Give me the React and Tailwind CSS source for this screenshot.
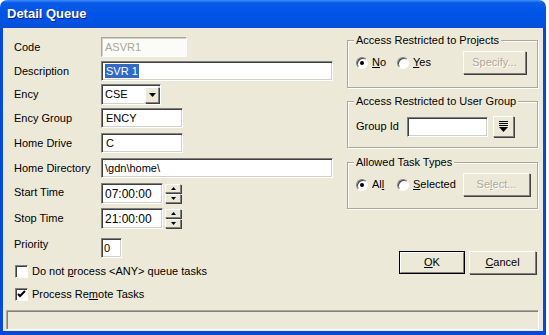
import React from "react";

const sunken =
  "border border-t-[#808080] border-l-[#808080] border-r-white border-b-white shadow-[inset_1px_1px_0_#404040,inset_-1px_-1px_0_#d4d0c8] bg-white";
const raised =
  "border border-t-white border-l-white border-r-[#808080] border-b-[#808080] shadow-[1px_1px_0_#404040] bg-[#ece9d8]";

function Radio({ checked }) {
  return (
    <div className="relative w-[12px] h-[12px] rounded-full bg-white border border-t-[#808080] border-l-[#808080] border-r-white border-b-white shadow-[inset_1px_1px_0_#404040]">
      {checked && (
        <div className="absolute left-[3px] top-[3px] w-[4px] h-[4px] rounded-full bg-black" />
      )}
    </div>
  );
}

function Check({ checked }) {
  return (
    <div className="w-[13px] h-[13px] bg-white border border-t-[#808080] border-l-[#808080] border-r-white border-b-white shadow-[inset_1px_1px_0_#404040] flex items-center justify-center">
      {checked && (
        <svg width="9" height="9" viewBox="0 0 9 9">
          <path d="M1 4 L3 6 L8 1" stroke="#000" strokeWidth="2" fill="none" />
        </svg>
      )}
    </div>
  );
}

function Spinner() {
  return (
    <div className="flex flex-col gap-[1px] ml-[2px] h-[21px] justify-center">
      <div className={raised + " w-[16px] h-[9px] flex items-center justify-center"}>
        <svg width="5" height="3" viewBox="0 0 5 3">
          <path d="M2.5 0 L5 3 L0 3 Z" fill="#000" />
        </svg>
      </div>
      <div className={raised + " w-[16px] h-[9px] flex items-center justify-center"}>
        <svg width="5" height="3" viewBox="0 0 5 3">
          <path d="M0 0 L5 0 L2.5 3 Z" fill="#000" />
        </svg>
      </div>
    </div>
  );
}

function Group({ title, children, className }) {
  return (
    <div
      className={
        "relative border border-[#aca899] shadow-[inset_1px_1px_0_white,1px_1px_0_white] " +
        className
      }
    >
      <span className="absolute left-[6px] top-[-8px] px-[2px] bg-[#ece9d8] leading-[14px]">
        {title}
      </span>
      {children}
    </div>
  );
}

export default function App() {
  return (
    <div className="w-[549px] h-[335px] bg-white font-['Liberation_Sans',Arial,sans-serif] text-[11px] text-black overflow-hidden">
      <div className="w-[546px] h-[335px] flex flex-col">
        {/* Title bar */}
        <div className="h-[28px] rounded-t-[7px] bg-[linear-gradient(to_bottom,#3d8ffc_0%,#0a5ae8_10%,#0055e6_45%,#0052e2_80%,#0a4ed2_100%)] flex items-center pl-[7px] shrink-0">
          <span className="text-white font-bold text-[13px] [text-shadow:1px_1px_#0a1e8a]">
            Detail Queue
          </span>
        </div>
        {/* Body */}
        <div className="flex-1 flex border-x-[3px] border-b-[4px] border-[#0449d8] bg-[#ece9d8]">
          <div className="flex-1 flex flex-col">
            <div className="flex">
              {/* Left column */}
              <div className="w-[344px] pl-[11px] flex flex-col">
                <div className="flex items-center mt-[9px] h-[20px]">
                  <div className="w-[87px]">Code</div>
                  <div className="w-[86px] h-[20px] border border-t-[#aca899] border-l-[#aca899] border-r-white border-b-white shadow-[inset_1px_1px_0_#d4d0c8] bg-[#fbfbf8] text-[#aca899] pl-[3px] flex items-center">
                    ASVR1
                  </div>
                </div>
                <div className="flex items-center mt-[4px] h-[20px]">
                  <div className="w-[87px]">Description</div>
                  <div className={sunken + " w-[232px] h-[20px] pl-[3px] flex items-center"}>
                    <span className="bg-[#316ac5] text-white leading-[14px] px-[1px]">
                      SVR 1
                    </span>
                  </div>
                </div>
                <div className="flex items-center mt-[3px] h-[21px]">
                  <div className="w-[87px]">Ency</div>
                  <div className={sunken + " w-[60px] h-[21px] pl-[3px] pr-[1px] flex items-center"}>
                    <span className="flex-1">CSE</span>
                    <div className={raised + " w-[14px] h-[16px] flex items-center justify-center"}>
                      <svg width="7" height="4" viewBox="0 0 7 4">
                        <path d="M0 0 L7 0 L3.5 4 Z" fill="#000" />
                      </svg>
                    </div>
                  </div>
                </div>
                <div className="flex items-center mt-[3px] h-[20px]">
                  <div className="w-[87px]">Ency Group</div>
                  <div className={sunken + " w-[82px] h-[20px] pl-[4px] flex items-center"}>
                    ENCY
                  </div>
                </div>
                <div className="flex items-center mt-[5px] h-[20px]">
                  <div className="w-[87px]">Home Drive</div>
                  <div className={sunken + " w-[82px] h-[20px] pl-[4px] flex items-center"}>
                    C
                  </div>
                </div>
                <div className="flex items-center mt-[5px] h-[20px]">
                  <div className="w-[87px]">Home Directory</div>
                  <div className={sunken + " w-[232px] h-[20px] pl-[3px] flex items-center"}>
                    \gdn\home\
                  </div>
                </div>
                <div className="flex items-center mt-[5px] h-[21px]">
                  <div className="w-[87px] pb-[2px]">Start Time</div>
                  <div className={sunken + " w-[62px] h-[21px] pl-[3px] flex items-center text-[12px]"}>
                    07:00:00
                  </div>
                  <Spinner />
                </div>
                <div className="flex items-center mt-[4px] h-[21px]">
                  <div className="w-[87px]">Stop Time</div>
                  <div className={sunken + " w-[62px] h-[21px] pl-[3px] flex items-center text-[12px]"}>
                    21:00:00
                  </div>
                  <Spinner />
                </div>
                <div className="flex items-center mt-[9px] h-[20px]">
                  <div className="w-[87px] pb-[8px]">Priority</div>
                  <div className={sunken + " w-[21px] h-[20px] pl-[2px] flex items-center"}>
                    0
                  </div>
                </div>
                <div className="flex items-center mt-[7px] h-[13px] ml-[1px] gap-[4px]">
                  <Check />
                  <span>
                    Do not <span className="underline">p</span>rocess &lt;ANY&gt; queue tasks
                  </span>
                </div>
                <div className="flex items-center mt-[10px] h-[13px] ml-[1px] gap-[4px]">
                  <Check checked />
                  <span>
                    Process Re<span className="underline">m</span>ote Tasks
                  </span>
                </div>
              </div>
              {/* Right column */}
              <div className="w-[191px] flex flex-col">
                <Group title="Access Restricted to Projects" className="mt-[12px] h-[48px] pt-[10px] pl-[8px]">
                  <div className="flex items-center h-[23px]">
                    <div className="w-[41px] flex items-center gap-[4px]">
                      <Radio checked />
                      <span>
                        <span className="underline">N</span>o
                      </span>
                    </div>
                    <div className="w-[66px] flex items-center gap-[4px]">
                      <Radio />
                      <span>
                        <span className="underline">Y</span>es
                      </span>
                    </div>
                    <div className={raised + " w-[63px] h-[23px] flex items-center justify-center text-[#aca899] [text-shadow:1px_1px_0_white]"}>
                      Specify...
                    </div>
                  </div>
                </Group>
                <Group title="Access Restricted to User Group" className="mt-[13px] h-[47px] pt-[14px] pl-[8px]">
                  <div className="flex items-center h-[21px]">
                    <div className="w-[51px]">Group Id</div>
                    <div className={sunken + " w-[81px] h-[20px]"} />
                    <div className={raised + " ml-[5px] w-[21px] h-[21px] flex items-center justify-center"}>
                      <svg width="9" height="12" viewBox="0 0 9 12">
                        <rect x="0" y="0" width="9" height="1" fill="#000" />
                        <rect x="0" y="2" width="9" height="1" fill="#000" />
                        <rect x="0" y="4" width="9" height="1" fill="#000" />
                        <path d="M0 6 L9 6 L4.5 11 Z" fill="#000" />
                      </svg>
                    </div>
                  </div>
                </Group>
                <Group title="Allowed Task Types" className="mt-[14px] h-[47px] pt-[10px] pl-[8px]">
                  <div className="flex items-center h-[23px]">
                    <div className="w-[41px] flex items-center gap-[4px]">
                      <Radio checked />
                      <span>
                        Al<span className="underline">l</span>
                      </span>
                    </div>
                    <div className="w-[66px] flex items-center gap-[4px]">
                      <Radio />
                      <span>
                        <span className="underline">S</span>elected
                      </span>
                    </div>
                    <div className={raised + " w-[67px] h-[23px] flex items-center justify-center text-[#aca899] [text-shadow:1px_1px_0_white]"}>
                      Se<span className="underline">l</span>ect...
                    </div>
                  </div>
                </Group>
                <div className="flex mt-[42px] ml-[52px] gap-[4px]">
                  <div className="w-[66px] h-[23px] border border-black">
                    <div className={raised + " w-full h-full flex items-center justify-center shadow-none border-r-[#404040] border-b-[#404040]"}>
                      <span>
                        <span className="underline">O</span>K
                      </span>
                    </div>
                  </div>
                  <div className={raised + " w-[67px] h-[23px] flex items-center justify-center"}>
                    <span>
                      <span className="underline">C</span>ancel
                    </span>
                  </div>
                </div>
              </div>
            </div>
            {/* Status bar */}
            <div className="mt-auto mb-[1px] ml-[3px] w-[533px] h-[20px] border border-t-[#aca899] border-l-[#aca899] border-r-white border-b-white shadow-[inset_1px_1px_0_#808080]" />
          </div>
        </div>
      </div>
    </div>
  );
}
